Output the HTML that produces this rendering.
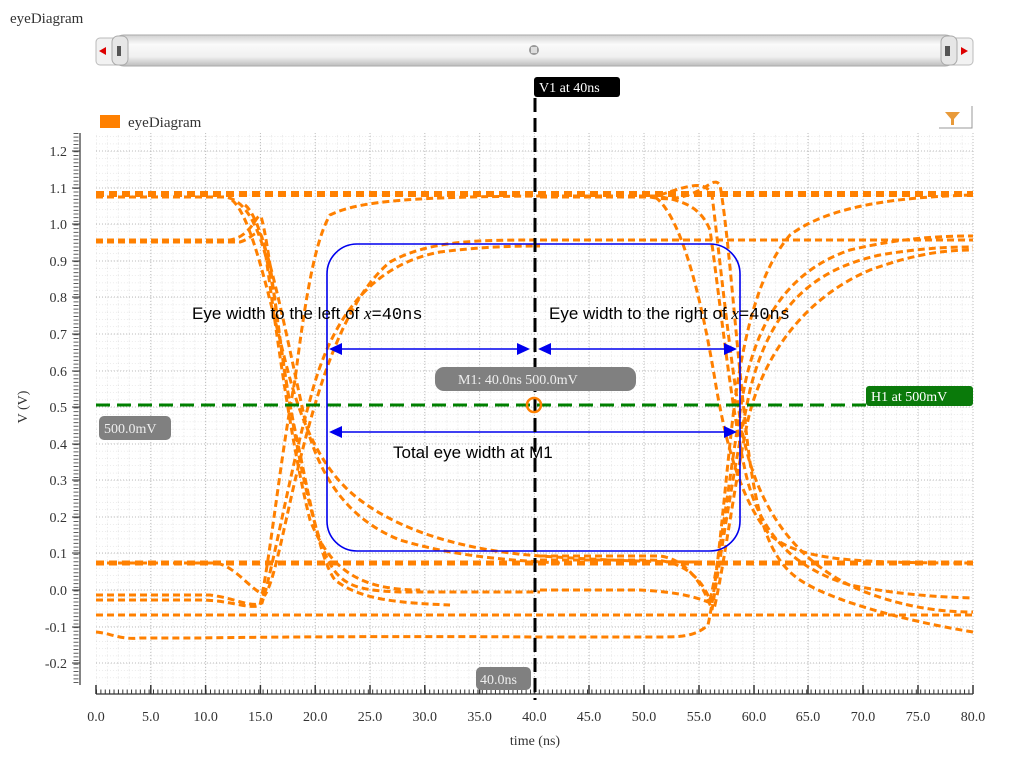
<!DOCTYPE html>
<html><head><meta charset="utf-8"><style>
html,body{margin:0;padding:0;background:#fff;width:1013px;height:772px;overflow:hidden}
svg{display:block}
.ser{font-family:"Liberation Serif",serif}
.san{font-family:"Liberation Sans",sans-serif}
</style></head><body>
<svg width="1013" height="772" viewBox="0 0 1013 772" xmlns="http://www.w3.org/2000/svg">
<defs>
<pattern id="gmin" x="96" y="151" width="10.96" height="7.314" patternUnits="userSpaceOnUse">
<path d="M0,0 V7.314" stroke="#d4d4d4" stroke-width="1" stroke-dasharray="1,2"/>
<path d="M0,0 H10.96" stroke="#d8d8d8" stroke-width="1" stroke-dasharray="1,2"/>
</pattern>
<linearGradient id="sb" x1="0" y1="0" x2="0" y2="1"><stop offset="0" stop-color="#d0d0d0"/><stop offset="0.3" stop-color="#fafafa"/><stop offset="0.7" stop-color="#f0f0f0"/><stop offset="1" stop-color="#bdbdbd"/></linearGradient>
</defs>
<text x="10" y="23" class="ser" font-size="15" fill="#333">eyeDiagram</text>
<rect x="96" y="38" width="877" height="27" rx="4" fill="#f2f2f2" stroke="#bbb"/>
<rect x="112" y="35" width="845" height="31" rx="12" fill="url(#sb)" stroke="#aaa"/>
<rect x="112" y="36" width="16" height="29" rx="6" fill="#e6e6e6" stroke="#aaa"/>
<rect x="941" y="36" width="16" height="29" rx="6" fill="#e6e6e6" stroke="#aaa"/>
<path d="M99,51 l7,-4 v8z" fill="#d00"/>
<path d="M968,51 l-7,-4 v8z" fill="#d00"/>
<rect x="117" y="46" width="4" height="10" fill="#555"/>
<rect x="945" y="46" width="5" height="10" fill="#555"/>
<circle cx="534" cy="50" r="5" fill="#999"/><rect x="531" y="47" width="6" height="6" fill="#ddd"/>
<rect x="100" y="115" width="20" height="13" fill="#ff8000"/>
<text x="128" y="127" class="ser" font-size="15" fill="#333">eyeDiagram</text>
<path d="M945,112 h15 l-6,7 v6 h-3 v-6z" fill="#e89a3a"/>
<path d="M939,128 H972 V106" fill="none" stroke="#999"/>
<rect x="96" y="133" width="877" height="552" fill="url(#gmin)"/>
<g stroke="#bdbdbd" stroke-width="1" stroke-dasharray="1,2">
<path d="M150.8,133V685M205.6,133V685M260.4,133V685M315.2,133V685M370,133V685M424.8,133V685M479.6,133V685M534.4,133V685M589,133V685M644,133V685M699,133V685M754,133V685M808,133V685M863,133V685M918,133V685M973,133V685"/>
<path d="M96,151H973M96,188H973M96,224H973M96,261H973M96,297H973M96,334H973M96,371H973M96,407H973M96,444H973M96,480H973M96,517H973M96,553H973M96,590H973M96,627H973M96,663H973"/>
</g>
<g stroke="#333" stroke-width="1.2">
<path d="M80,133V685"/>
<path d="M96,694H973"/>
</g>
<g stroke="#333">
<path d="M72,151h8M72,188h8M72,224h8M72,261h8M72,297h8M72,334h8M72,371h8M72,407h8M72,444h8M72,480h8M72,517h8M72,553h8M72,590h8M72,627h8M72,663h8"/>
</g>
<path d="M76,133V685" stroke="#333" stroke-width="5" stroke-dasharray="1,2.66" fill="none" opacity="0.8"/>
<path d="M96,692 H973" stroke="#333" stroke-width="5" stroke-dasharray="1,3.384" fill="none"/>
<path d="M96,694 V685 M150.8,694V685 M205.6,694V685 M260.4,694V685 M315.2,694V685 M370,694V685 M424.8,694V685 M479.6,694V685 M534.4,694V685 M589,694V685 M644,694V685 M699,694V685 M754,694V685 M808,694V685 M863,694V685 M918,694V685 M973,694V685" stroke="#333" stroke-width="1.5"/>
<g class="ser" font-size="14" fill="#333" text-anchor="end">
<text x="67" y="156">1.2</text><text x="67" y="193">1.1</text><text x="67" y="229">1.0</text><text x="67" y="266">0.9</text><text x="67" y="302">0.8</text><text x="67" y="339">0.7</text><text x="67" y="376">0.6</text><text x="67" y="412">0.5</text><text x="67" y="449">0.4</text><text x="67" y="485">0.3</text><text x="67" y="522">0.2</text><text x="67" y="558">0.1</text><text x="67" y="595">0.0</text><text x="67" y="632">-0.1</text><text x="67" y="668">-0.2</text>
</g>
<g class="ser" font-size="14" fill="#333" text-anchor="middle">
<text x="96" y="721">0.0</text><text x="150.8" y="721">5.0</text><text x="205.6" y="721">10.0</text><text x="260.4" y="721">15.0</text><text x="315.2" y="721">20.0</text><text x="370" y="721">25.0</text><text x="424.8" y="721">30.0</text><text x="479.6" y="721">35.0</text><text x="534.4" y="721">40.0</text><text x="589" y="721">45.0</text><text x="644" y="721">50.0</text><text x="699" y="721">55.0</text><text x="754" y="721">60.0</text><text x="808" y="721">65.0</text><text x="863" y="721">70.0</text><text x="918" y="721">75.0</text><text x="973" y="721">80.0</text>
<text x="535" y="745">time (ns)</text>
</g>
<text class="ser" font-size="14" fill="#333" transform="translate(27,407) rotate(-90)" text-anchor="middle">V (V)</text>
<g fill="none" stroke="#ff8000" stroke-width="3" stroke-dasharray="7,4">
<path d="M96,194H973" stroke-width="6" stroke-dasharray="8,5"/>
<path d="M96,563H973" stroke-width="5" stroke-dasharray="8,5"/>
<path d="M96,197 H225 C250,200 265,240 275,300 C285,380 300,480 320,540 C335,585 350,590 400,592 H540"/>
<path d="M96,240 H230 C255,236 258,205 262,220 C272,260 280,360 295,430 C310,500 320,560 335,580 C360,600 400,603 450,605"/>
<path d="M96,242 H240 C255,238 260,220 265,250 C275,320 290,440 310,520 C330,570 360,590 420,590"/>
<path d="M96,600 H200 C230,600 250,610 260,605 C270,560 280,460 295,380 C305,300 315,240 330,215 C360,200 420,197 540,196"/>
<path d="M96,595 H210 C235,598 250,608 262,603 C275,560 290,470 310,400 C330,320 370,265 440,252 C480,247 510,246 540,246"/>
<path d="M96,563 H215 C235,565 250,590 265,595 C275,580 285,520 300,460 C320,380 345,300 390,262 C430,240 480,240 540,240"/>
<path d="M232,200 C250,215 265,280 285,360 C300,420 320,470 360,500 C400,530 460,550 540,556 C600,560 650,562 700,562"/>
<path d="M245,205 C265,220 285,330 305,420 C320,480 350,520 400,540 C450,555 500,560 560,563"/>
<path d="M96,615 H973"/>
<path d="M96,632 C110,633 120,640 140,638 H200 C260,637 400,636 540,637 H655 C680,637 695,637 708,625 C718,580 725,480 735,400 C745,330 760,270 790,235 C830,205 900,197 973,195"/>
<path d="M540,197 H650 C665,200 680,200 700,190 C710,185 715,178 720,185 C728,230 735,330 745,420 C755,520 770,560 800,580 C830,600 900,620 973,632"/>
<path d="M540,196 H655 C680,200 700,205 710,230 C720,300 730,400 745,470 C760,540 800,570 850,585 C900,595 940,597 973,598"/>
<path d="M540,560 H650 C680,560 700,575 710,600 C720,560 730,470 742,400 C755,320 790,270 850,250 C900,238 940,236 973,236"/>
<path d="M540,556 H660 C690,560 705,590 712,610 C720,560 735,460 750,390 C770,310 810,270 880,255 C920,248 950,247 973,247"/>
<path d="M540,590 H640 C680,592 700,598 715,605 C725,560 735,480 748,420 C762,360 800,300 870,270 C920,252 950,250 973,250"/>
<path d="M655,197 C680,215 700,290 715,380 C725,440 740,500 770,535 C800,560 850,563 973,563"/>
<path d="M660,195 C690,185 705,180 712,195 C720,260 730,360 742,430 C755,500 790,560 860,590 C910,610 950,612 973,612"/>
<path d="M540,240 H973"/>
</g>
<path d="M96,405H870" stroke="#008000" stroke-width="3" stroke-dasharray="14,7"/>
<rect x="327" y="244" width="413" height="307" rx="30" fill="none" stroke="#0000ee" stroke-width="1.6"/>
<g stroke="#0000ee" stroke-width="1.6">
<path d="M340,349H518M549,349H725M340,432H725"/>
</g>
<g fill="#0000ee">
<path d="M329,349l13,-6v12z"/><path d="M530,349l-13,-6v12z"/>
<path d="M538,349l13,-6v12z"/><path d="M737,349l-13,-6v12z"/>
<path d="M329,432l13,-6v12z"/><path d="M737,432l-13,-6v12z"/>
</g>
<path d="M535,98V700" stroke="#000" stroke-width="3" stroke-dasharray="14,6"/>
<rect x="534" y="77" width="86" height="20" rx="3" fill="#000"/>
<text x="539" y="92" class="ser" font-size="14" fill="#fff">V1 at 40ns</text>
<rect x="866" y="386" width="107" height="20" rx="3" fill="#0a7a0a"/>
<text x="871" y="401" class="ser" font-size="14" fill="#fff">H1 at 500mV</text>
<rect x="435" y="367" width="201" height="24" rx="9" fill="#808080"/>
<text x="458" y="384" class="ser" font-size="14" fill="#eee">M1: 40.0ns 500.0mV</text>
<circle cx="534" cy="405" r="7" fill="none" stroke="#ff8000" stroke-width="2.5"/>
<rect x="99" y="416" width="72" height="24" rx="5" fill="#808080"/>
<text x="104" y="433" class="ser" font-size="14" fill="#eee">500.0mV</text>
<rect x="476" y="667" width="55" height="23" rx="5" fill="#808080"/>
<text x="480" y="684" class="ser" font-size="14" fill="#eee">40.0ns</text>
<text x="192" y="319" class="san" font-size="17" fill="#000">Eye width to the left of <tspan class="ser" font-style="italic">x</tspan><tspan font-family="Liberation Mono,monospace">=40ns</tspan></text>
<text x="549" y="319" class="san" font-size="17" fill="#000">Eye width to the right of <tspan class="ser" font-style="italic">x</tspan><tspan font-family="Liberation Mono,monospace">=40ns</tspan></text>
<text x="393" y="458" class="san" font-size="17" fill="#000">Total eye width at M1</text>
</svg>
</body></html>
